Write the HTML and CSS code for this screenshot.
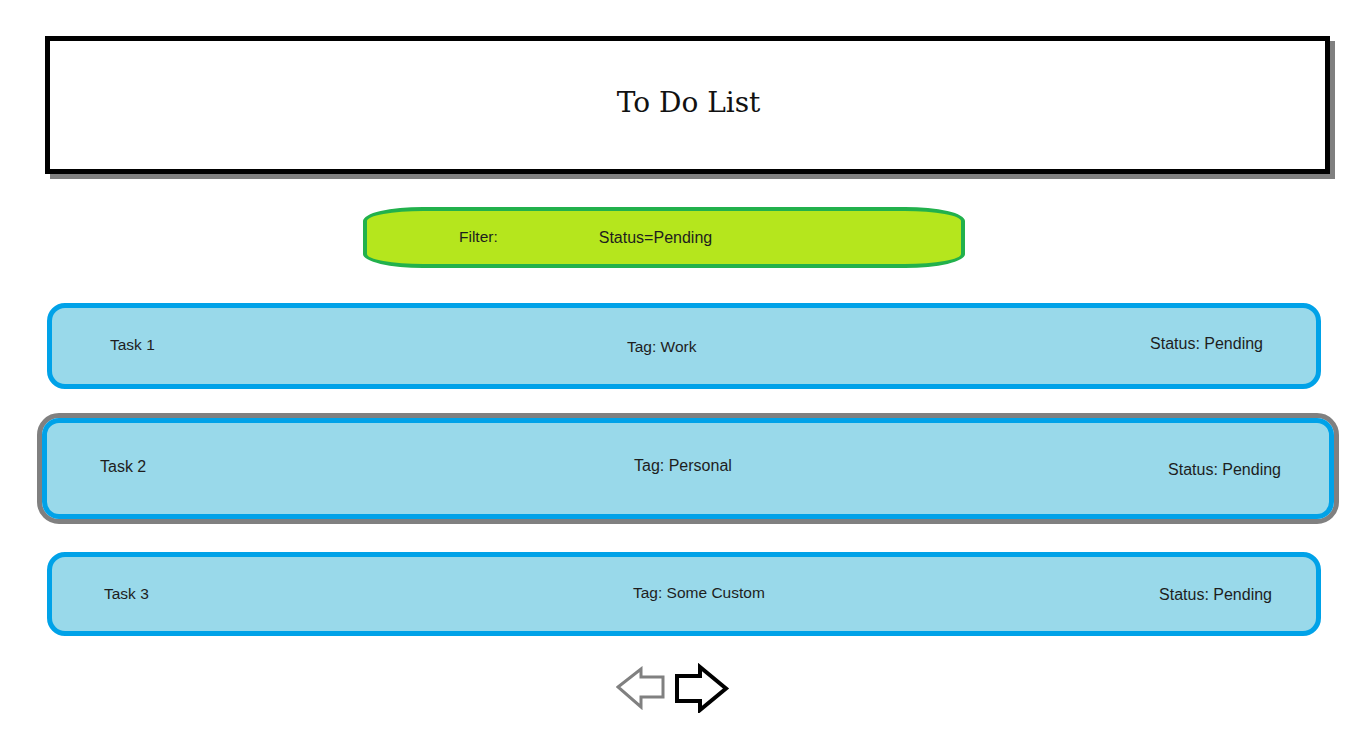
FILE: index.html
```html
<!DOCTYPE html>
<html lang="en">
<head>
<meta charset="utf-8">
<title>To Do List</title>
<link rel="stylesheet" href="styles.css">
</head>
<body>
<main class="page">
  <header class="title-box">
    <h1 class="title">To Do List</h1>
  </header>

  <div class="filter">
    <span class="filter-label">Filter:</span>
    <span class="filter-value">Status=Pending</span>
  </div>

  <div class="task task-1">
    <span class="task-name">Task 1</span>
    <span class="task-tag">Tag: Work</span>
    <span class="task-status">Status: Pending</span>
  </div>

  <div class="selected">
    <div class="task task-2">
      <span class="task-name">Task 2</span>
      <span class="task-tag">Tag: Personal</span>
      <span class="task-status">Status: Pending</span>
    </div>
  </div>

  <div class="task task-3">
    <span class="task-name">Task 3</span>
    <span class="task-tag">Tag: Some Custom</span>
    <span class="task-status">Status: Pending</span>
  </div>

  <nav class="pager">
    <svg class="arrow-prev" width="50" height="44" viewBox="0 0 50 44">
      <polygon points="2,21 25,3 25,11 47,11 47,31 25,31 25,41" fill="none" stroke="#808080" stroke-width="3" stroke-linejoin="miter"/>
    </svg>
    <svg class="arrow-next" width="56" height="50" viewBox="0 0 56 50">
      <polygon points="3,13 26,13 26,4 52,25.5 26,47 26,38 3,38" fill="none" stroke="#000" stroke-width="4" stroke-linejoin="miter"/>
    </svg>
  </nav>
</main>
</body>
</html>
```

FILE: styles.css
```css
* {
  box-sizing: border-box;
}

html, body {
  margin: 0;
  padding: 0;
  background: #ffffff;
}

body {
  font-family: "Liberation Sans", Arial, sans-serif;
  color: #1e1e1e;
}

.page {
  display: flex;
  flex-direction: column;
  align-items: flex-start;
  padding-top: 36px;
  width: 1365px;
}

.title-box {
  margin-left: 45px;
  width: 1285px;
  height: 138px;
  border: 5px solid #000;
  box-shadow: 5px 5px 0 #808080;
  display: flex;
  align-items: center;
  justify-content: center;
  padding-bottom: 6px;
  background: #fff;
}

.title {
  margin: 0;
  font-family: "DejaVu Serif", "Liberation Serif", serif;
  font-weight: normal;
  font-size: 28px;
  color: #111;
  padding-left: 2px;
}

.filter {
  margin-top: 33px;
  margin-left: 363px;
  width: 602px;
  height: 61px;
  border: 4px solid #22b14c;
  border-radius: 60px / 14px;
  background: #b5e61d;
  display: flex;
  align-items: center;
  padding-left: 92px;
  gap: 101px;
  font-size: 15.5px;
  padding-bottom: 2px;
}

.filter-value {
  font-size: 16px;
  padding-top: 2px;
}

.task {
  display: flex;
  align-items: center;
  background: #99d9ea;
  border: 5px solid #00a2e8;
  border-radius: 18px;
  font-size: 15.5px;
}

.task-name {
  flex: none;
}

.task-tag {
  flex: none;
}

.task-status {
  margin-left: auto;
  font-size: 16px;
}

.task-1 {
  margin-top: 35px;
  margin-left: 47px;
  width: 1274px;
  height: 86px;
  padding: 0 53px 0 58px;
}

.task-1 .task-name {
  width: 517px;
  margin-top: -2px;
}

.task-1 .task-tag {
  margin-top: 2px;
}

.task-1 .task-status {
  margin-top: -4px;
}

.selected {
  margin-top: 24px;
  margin-left: 37px;
  width: 1302px;
  border: 5px solid #808080;
  border-radius: 22px;
}

.task-2 {
  width: 1292px;
  height: 101px;
  padding: 0 48px 0 53px;
  font-size: 16px;
  border-radius: 17px;
}

.task-2 .task-name {
  width: 534px;
  margin-top: -3px;
}

.task-2 .task-tag {
  margin-top: -5px;
}

.task-2 .task-status {
  margin-top: 3px;
}

.task-3 {
  margin-top: 28px;
  margin-left: 47px;
  width: 1274px;
  height: 84px;
  padding: 0 44px 0 52px;
}

.task-3 .task-name {
  width: 529px;
}

.task-3 .task-tag {
  margin-top: -2px;
}

.task-3 .task-status {
  margin-top: 2px;
}

.pager {
  margin-top: 27px;
  margin-left: 616px;
  display: flex;
  align-items: center;
  gap: 8px;
}

.pager svg {
  display: block;
}
```
